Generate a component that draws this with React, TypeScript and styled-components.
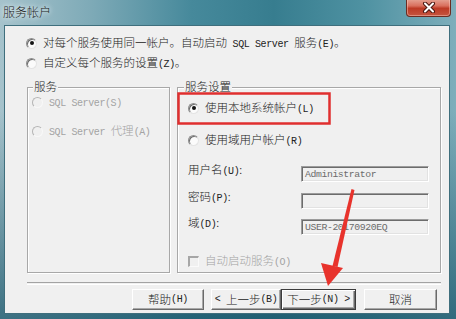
import React from "react";
import styled, { createGlobalStyle } from "styled-components";

const GlobalStyle = createGlobalStyle`
  html, body {
    margin: 0;
    padding: 0;
    background: #fff;
  }
  body {
    font-family: "Noto Sans CJK SC", "Noto Sans", sans-serif;
    font-weight: 300;
  }
`;

const Window = styled.div`
  position: relative;
  width: 456px;
  height: 319px;
  display: flex;
  flex-direction: column;
  overflow: hidden;
  background:
    linear-gradient(180deg, rgba(0, 0, 0, 0) 0%, rgba(0, 0, 0, 0) 35%, rgba(25, 85, 105, 0.75) 100%),
    linear-gradient(90deg, #a6c3cc 0%, #7eaab7 20%, #46899b 42%, #377d8f 60%, #4f92a2 80%, #7eaebb 100%);
`;

const TitleBar = styled.div`
  height: 25px;
  display: flex;
  align-items: flex-start;
  flex: none;
`;

const Title = styled.span`
  margin: 6px 0 0 3px;
  font-size: 12px;
  line-height: 1;
  color: #1c1c1c;
  text-shadow: 0 0 4px #e8f2f5, 0 0 7px #e8f2f5;
`;

const CloseButton = styled.div`
  margin: -1px 5px 0 auto;
  width: 43px;
  height: 17px;
  display: flex;
  align-items: center;
  justify-content: center;
  border: 1px solid #6b2c22;
  border-top: none;
  border-radius: 0 0 4px 4px;
  background: linear-gradient(180deg, #e6a596 0%, #d9705e 40%, #bd3a25 55%, #c5553f 100%);
  box-shadow: inset 0 0 0 1px rgba(255, 210, 200, 0.45);
`;

const Client = styled.div`
  flex: 1;
  margin: 0 6px 5px 4px;
  padding: 7px 8px 0 22px;
  display: flex;
  flex-direction: column;
  background: #f0f0f0;
  border: 1px solid #3f6f7d;
`;

const TopOptions = styled.div`
  display: flex;
  flex-direction: column;
  margin-left: -1px;
`;

const OptionRow = styled.div<{ $disabled?: boolean; $mt?: number }>`
  display: flex;
  align-items: center;
  gap: 6px;
  height: 20px;
  margin-top: ${(p) => p.$mt ?? 0}px;
  font-size: 11.5px;
  line-height: 1;
  white-space: nowrap;
  color: ${(p) => (p.$disabled ? "#a3a3a3" : "#222")};
`;

const RadioMark = styled.span<{ $checked?: boolean; $disabled?: boolean }>`
  position: relative;
  flex: none;
  width: 11px;
  height: 11px;
  box-sizing: border-box;
  border-radius: 50%;
  border: 1px solid;
  border-color: ${(p) =>
    p.$disabled ? "#b5b5b5 #f8f8f8 #f8f8f8 #b5b5b5" : "#8d8d8d #e4e4e4 #e4e4e4 #8d8d8d"};
  background: ${(p) => (p.$disabled ? "#f0f0f0" : "#fbfbfb")};
  box-shadow: ${(p) => (p.$disabled ? "none" : "inset 1px 1px 0 #6e6e6e")};

  &::after {
    content: "";
    display: ${(p) => (p.$checked ? "block" : "none")};
    position: absolute;
    left: 2.5px;
    top: 2.5px;
    width: 4px;
    height: 4px;
    border-radius: 50%;
    background: #151515;
  }
`;

const CheckMark = styled.span`
  flex: none;
  width: 11px;
  height: 11px;
  box-sizing: border-box;
  border-top: 2px solid #a6a6a6;
  border-left: 2px solid #a6a6a6;
  border-right: 1px solid #fafafa;
  border-bottom: 1px solid #fafafa;
`;

const Lat = styled.span`
  font-family: "Liberation Mono", "DejaVu Sans Mono", monospace;
  font-weight: 400;
  font-size: 10px;
  letter-spacing: -0.4px;
  white-space: pre;
`;

const GroupRow = styled.div`
  display: flex;
  gap: 7px;
  height: 186px;
  margin-top: 14px;
`;

const Group = styled.div<{ $width?: number; $pad: string }>`
  position: relative;
  flex: ${(p) => (p.$width ? `0 0 ${p.$width}px` : "1")};
  box-sizing: border-box;
  padding: ${(p) => p.$pad};
  border: 1px solid #a8a8a8;
  box-shadow: inset 1px 1px 0 #fff, 1px 1px 0 #fff;
  display: flex;
  flex-direction: column;
`;

const Legend = styled.span<{ $left: number }>`
  position: absolute;
  top: -7px;
  left: ${(p) => p.$left}px;
  padding: 0 1px;
  background: #f0f0f0;
  font-size: 11.5px;
  line-height: 1;
  color: #222;
`;

const FieldRow = styled.div<{ $mt: number }>`
  display: flex;
  align-items: flex-start;
  height: 16px;
  margin-top: ${(p) => p.$mt}px;
`;

const FieldLabel = styled.span`
  flex: 0 0 113px;
  margin-top: -2px;
  font-size: 11.5px;
  line-height: 1;
  color: #222;
`;

const Field = styled.div`
  width: 128px;
  height: 16px;
  box-sizing: border-box;
  display: flex;
  align-items: center;
  padding-left: 3px;
  border: 1px solid;
  border-color: #9c9c9c #ffffff #ffffff #9c9c9c;
  box-shadow: inset 1px 1px 0 #6c6c6c, inset -1px -1px 0 #e2e2e2;
  background: #f0f0f0;
  font-family: "Liberation Mono", "DejaVu Sans Mono", monospace;
  font-weight: 400;
  font-size: 9.8px;
  letter-spacing: -0.4px;
  color: #6c6c6c;
`;

const Separator = styled.div`
  margin-top: 9px;
  height: 1px;
  border-top: 1px solid #a3a3a3;
  border-bottom: 1px solid #fff;
`;

const ButtonRow = styled.div`
  display: flex;
  justify-content: flex-end;
  margin: 4px 4px 0 0;
`;

const Button = styled.div<{ $width: number; $gap?: number; $default?: boolean }>`
  width: ${(p) => p.$width}px;
  height: 21px;
  margin-left: ${(p) => p.$gap ?? 0}px;
  box-sizing: border-box;
  display: flex;
  align-items: center;
  justify-content: center;
  background: #f0f0f0;
  border: 1px solid;
  border-color: ${(p) => (p.$default ? "#3c3c3c" : "#ffffff #6a6a6a #6a6a6a #ffffff")};
  box-shadow: ${(p) =>
    p.$default
      ? "inset 1px 1px 0 #fff, inset -1px -1px 0 #6a6a6a, inset -2px -2px 0 #a8a8a8"
      : "inset -1px -1px 0 #a8a8a8"};
  font-size: 11.5px;
  line-height: 1;
  color: #222;
  white-space: nowrap;
`;

const Overlay = styled.svg`
  position: absolute;
  left: 0;
  top: 0;
  pointer-events: none;
`;

const Radio = ({
  checked,
  disabled,
  mt,
  children,
}: {
  checked?: boolean;
  disabled?: boolean;
  mt?: number;
  children: React.ReactNode;
}) => (
  <OptionRow $disabled={disabled} $mt={mt}>
    <RadioMark $checked={checked} $disabled={disabled} />
    <span>{children}</span>
  </OptionRow>
);

const App = () => {
  return (
    <>
      <GlobalStyle />
      <Window>
        <TitleBar>
          <Title>服务帐户</Title>
          <CloseButton>
            <svg width="14" height="11" viewBox="0 0 14 11">
              <path d="M3 1.5 L11 9.5 M11 1.5 L3 9.5" stroke="#4a1710" strokeWidth="4" strokeLinecap="round" />
              <path d="M3 1.5 L11 9.5 M11 1.5 L3 9.5" stroke="#fff" strokeWidth="2" strokeLinecap="round" />
            </svg>
          </CloseButton>
        </TitleBar>

        <Client>
          <TopOptions>
            <Radio checked>
              对每个服务使用同一帐户。自动启动<Lat> SQL Server </Lat>服务<Lat>(E)</Lat>。
            </Radio>
            <Radio>
              自定义每个服务的设置<Lat>(Z)</Lat>。
            </Radio>
          </TopOptions>

          <GroupRow>
            <Group $width={143} $pad="4px 0 0 4px">
              <Legend $left={5}>服务</Legend>
              <Radio disabled>
                <Lat>SQL Server(S)</Lat>
              </Radio>
              <Radio disabled mt={9}>
                <Lat>SQL Server </Lat>代理<Lat>(A)</Lat>
              </Radio>
            </Group>

            <Group $pad="10px 0 0 10px">
              <Legend $left={6}>服务设置</Legend>
              <Radio checked>
                使用本地系统帐户<Lat>(L)</Lat>
              </Radio>
              <Radio mt={12}>
                使用域用户帐户<Lat>(R)</Lat>
              </Radio>
              <FieldRow $mt={16}>
                <FieldLabel>
                  用户名<Lat>(U)</Lat>:
                </FieldLabel>
                <Field>Administrator</Field>
              </FieldRow>
              <FieldRow $mt={11}>
                <FieldLabel>
                  密码<Lat>(P)</Lat>:
                </FieldLabel>
                <Field />
              </FieldRow>
              <FieldRow $mt={10}>
                <FieldLabel>
                  域<Lat>(D)</Lat>:
                </FieldLabel>
                <Field>USER-20170920EQ</Field>
              </FieldRow>
              <OptionRow $disabled $mt={16}>
                <CheckMark />
                <span>
                  自动启动服务<Lat>(O)</Lat>
                </span>
              </OptionRow>
            </Group>
          </GroupRow>

          <Separator />

          <ButtonRow>
            <Button $width={72}>
              帮助<Lat>(H)</Lat>
            </Button>
            <Button $width={70} $gap={7}>
              <Lat>&lt; </Lat>上一步<Lat>(B)</Lat>
            </Button>
            <Button $width={75} $default>
              下一步<Lat>(N) &gt;</Lat>
            </Button>
            <Button $width={73} $gap={8}>
              取消
            </Button>
          </ButtonRow>
        </Client>

        <Overlay width="456" height="319" viewBox="0 0 456 319">
          <rect x="178.5" y="93.5" width="151" height="30" fill="none" stroke="#e02f2f" strokeWidth="2.5" />
          <polygon points="351.5,189 354.5,190 337.5,267 332.5,266" fill="#e8332c" />
          <polygon points="321,263 343,268 328,286" fill="#e8332c" />
        </Overlay>
      </Window>
    </>
  );
};

export default App;
